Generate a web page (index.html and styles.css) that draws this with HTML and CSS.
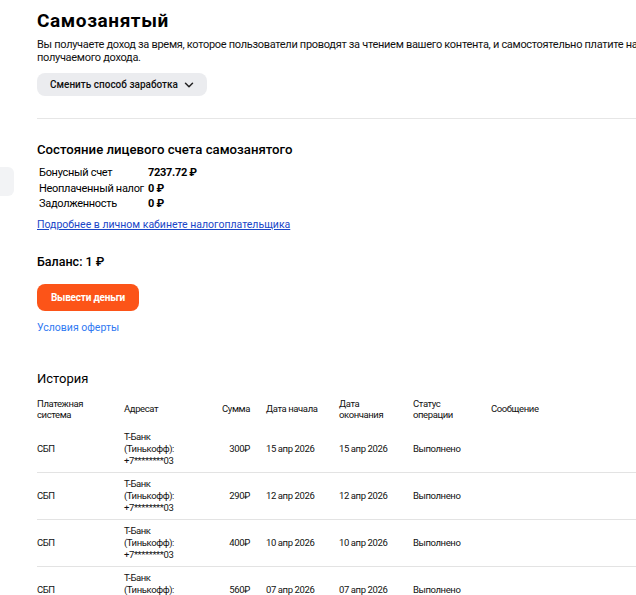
FILE: index.html
```html
<!DOCTYPE html>
<html lang="ru">
<head>
    <meta charset="UTF-8">
    <meta name="viewport" content="width=device-width, initial-scale=1.0">
    <title>Самозанятый</title>
    <link rel="stylesheet" href="styles.css">
</head>
<body>
    <div class="side-tab"></div>

    <div class="page">
        <h1 class="title">Самозанятый</h1>
        <p class="lead">Вы получаете доход за время, которое пользователи проводят за чтением вашего контента, и самостоятельно платите налог с получаемого дохода.</p>
        <button class="switch-btn">
            Сменить способ заработка
            <svg width="10" height="10" viewBox="0 0 10 10"><path d="M1.5 3.2 L5 6.7 L8.5 3.2" fill="none" stroke="#222" stroke-width="1.5" stroke-linecap="round" stroke-linejoin="round"/></svg>
        </button>

        <div class="divider"></div>

        <h2 class="section-title">Состояние лицевого счета самозанятого</h2>
        <table class="account">
            <tr><td>Бонусный счет</td><td class="val">7237.72 ₽</td></tr>
            <tr><td>Неоплаченный налог</td><td class="val">0 ₽</td></tr>
            <tr><td>Задолженность</td><td class="val">0 ₽</td></tr>
        </table>
        <a class="tax-link" href="#">Подробнее в личном кабинете налогоплательщика</a>

        <div class="balance">Баланс: 1 ₽</div>
        <button class="withdraw-btn">Вывести деньги</button>
        <a class="offer-link" href="#">Условия оферты</a>

        <h3 class="history-title">История</h3>
        <table class="history">
            <colgroup>
                <col style="width: 87px">
                <col style="width: 84px">
                <col style="width: 58px">
                <col style="width: 73px">
                <col style="width: 74px">
                <col style="width: 78px">
                <col>
            </colgroup>
            <thead>
                <tr>
                    <th>Платежная<br>система</th>
                    <th>Адресат</th>
                    <th class="sum">Сумма</th>
                    <th>Дата начала</th>
                    <th>Дата<br>окончания</th>
                    <th>Статус<br>операции</th>
                    <th>Сообщение</th>
                </tr>
            </thead>
            <tbody id="history-body"></tbody>
        </table>
    </div>

    <script>
        const rows = [
            { sum: 300, start: '15 апр 2026', end: '15 апр 2026' },
            { sum: 290, start: '12 апр 2026', end: '12 апр 2026' },
            { sum: 400, start: '10 апр 2026', end: '10 апр 2026' },
            { sum: 560, start: '07 апр 2026', end: '07 апр 2026' }
        ];

        const body = document.getElementById('history-body');
        rows.forEach(r => {
            const tr = document.createElement('tr');
            tr.innerHTML = `
                <td>СБП</td>
                <td>Т-Банк<br>(Тинькофф):<br>+7********03</td>
                <td class="sum">${r.sum}₽</td>
                <td>${r.start}</td>
                <td>${r.end}</td>
                <td>Выполнено</td>
                <td></td>`;
            body.appendChild(tr);
        });
    </script>
</body>
</html>
```

FILE: styles.css
```css
html {
    overflow: hidden;
}

body {
    font-family: Roboto, Arial, sans-serif;
    color: #000;
    background-color: #fff;
    margin: 0;
}

.side-tab {
    position: absolute;
    left: 0;
    top: 167px;
    width: 14px;
    height: 29px;
    background-color: #f2f3f5;
    border-radius: 0 6px 6px 0;
}

.page {
    width: 700px;
    padding: 10px 0 40px 37px;
}

.title {
    font-size: 19px;
    font-weight: 700;
    letter-spacing: 0.6px;
    margin: 0;
    line-height: 22px;
}

.lead {
    font-size: 11px;
    letter-spacing: -0.3px;
    line-height: 13px;
    margin: 6px 0 0;
    width: 640px;
    color: #111;
}

.switch-btn {
    margin-top: 9px;
    display: flex;
    align-items: center;
    gap: 6px;
    height: 23px;
    padding: 0 13px;
    border: none;
    border-radius: 8px;
    background-color: #ebecef;
    font-family: inherit;
    font-size: 10px;
    font-weight: 500;
    color: #111;
    cursor: pointer;
}

.divider {
    height: 1px;
    background-color: #e6e6e6;
    margin-top: 22px;
}

.section-title {
    font-size: 13.2px;
    font-weight: 500;
    margin: 23px 0 0;
    line-height: 16px;
}

.account {
    margin-top: 7px;
    border-collapse: collapse;
    font-size: 11px;
    letter-spacing: -0.3px;
}

.account td {
    padding: 0 2px;
    line-height: 15.5px;
    white-space: nowrap;
}

.account .val {
    font-weight: 700;
}

.tax-link {
    display: block;
    margin-top: 6px;
    font-size: 10.5px;
    color: #1a46c8;
    text-decoration: underline;
}

.balance {
    margin-top: 23px;
    font-size: 12.5px;
    font-weight: 500;
    line-height: 16px;
}

.withdraw-btn {
    display: block;
    margin-top: 14px;
    width: 102px;
    height: 27px;
    border: none;
    border-radius: 8px;
    background-color: #fc5418;
    color: #fff;
    font-family: inherit;
    font-size: 10px;
    letter-spacing: -0.2px;
    font-weight: 700;
    cursor: pointer;
}

.offer-link {
    display: block;
    margin-top: 10px;
    font-size: 10.5px;
    color: #2f79f2;
    text-decoration: none;
}

.history-title {
    margin: 36px 0 5px;
    font-size: 13px;
    font-weight: 400;
    line-height: 17px;
}

.history {
    width: 663px;
    table-layout: fixed;
    border-collapse: collapse;
    font-size: 9.5px;
    letter-spacing: -0.4px;
    color: #111;
}

.history th {
    text-align: left;
    font-weight: 400;
    height: 34px;
    line-height: 11px;
    padding: 0;
}

.history td {
    height: 46px;
    padding: 0;
    line-height: 12px;
    border-top: 1px solid #e3e3e3;
}

.history tbody tr:first-child td {
    border-top: none;
}

.history .sum {
    text-align: right;
    padding-right: 16px;
}
```
